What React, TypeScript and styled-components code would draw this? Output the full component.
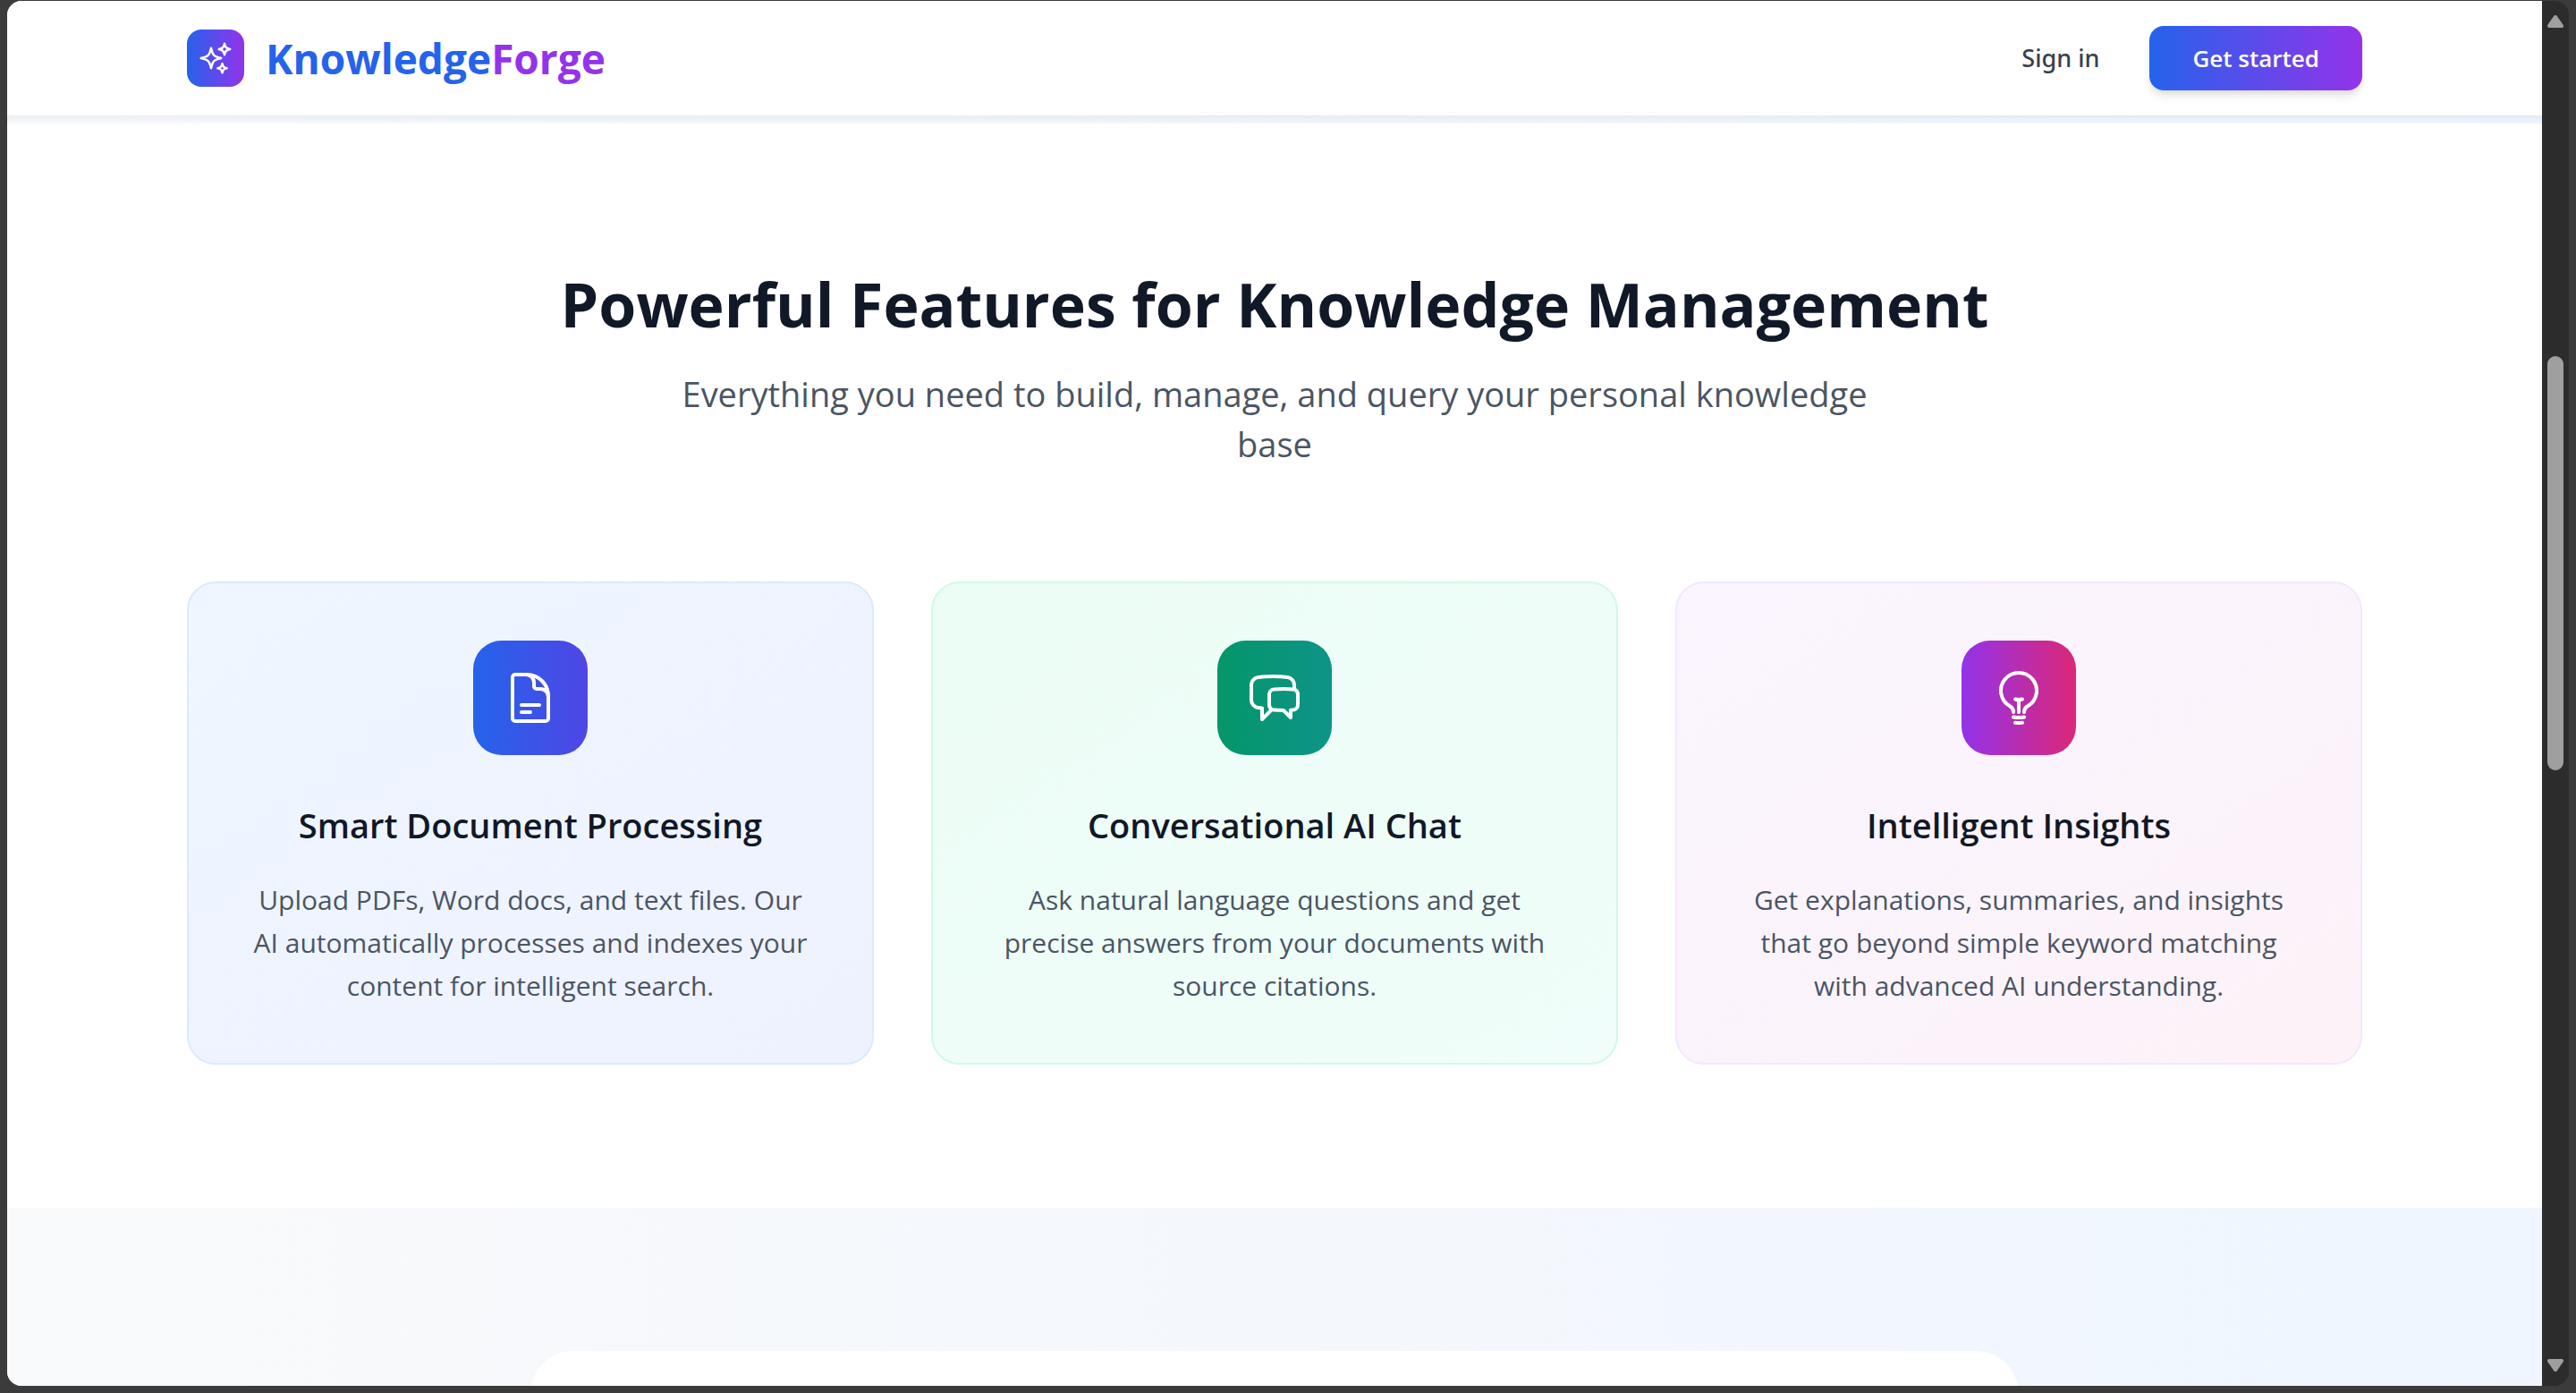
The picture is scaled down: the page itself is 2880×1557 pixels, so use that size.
import React from "react";
import styled, { createGlobalStyle } from "styled-components";
import {
  HiOutlineChatBubbleLeftRight,
  HiOutlineDocumentText,
  HiOutlineLightBulb,
  HiOutlineSparkles,
} from "react-icons/hi2";

const GlobalStyle = createGlobalStyle`
  *, *::before, *::after { box-sizing: border-box; }
  body {
    margin: 0;
    background: #3b3b3b;
    color: #111827;
    font-family: "Segoe UI", "Open Sans", "Noto Sans", sans-serif;
  }
  h2, h3, p { margin: 0; }
`;

const Frame = styled.div`
  height: 100vh;
  padding: 1px 8px 8px;
  background: #3b3b3b;
`;

const Window = styled.div`
  display: flex;
  height: 100%;
  border-radius: 16px;
  overflow: hidden;
  background: #2c2c2c;
`;

const Viewport = styled.div`
  flex: 1;
  min-width: 0;
  overflow: hidden;
  background: #ffffff;
`;

const Header = styled.header`
  background: #ffffff;
`;

const Container = styled.div`
  max-width: 2560px;
  margin: 0 auto;
  padding: 0 64px;
`;

const Bar = styled(Container)`
  display: flex;
  align-items: center;
  justify-content: space-between;
  height: 128px;
`;

const Brand = styled.a`
  display: flex;
  align-items: center;
  gap: 24px;
  color: #2563eb;
  font-size: 46px;
  line-height: 64px;
  font-weight: 700;
  text-decoration: none;
`;

const BrandAccent = styled.span`
  color: #9333ea;
`;

const BrandMark = styled.span`
  display: grid;
  place-items: center;
  width: 64px;
  height: 64px;
  border-radius: 16px;
  background: linear-gradient(to right, #2563eb, #9333ea);
  color: #ffffff;
`;

const Nav = styled.nav`
  display: flex;
  align-items: center;
  gap: 32px;
`;

const SignIn = styled.a`
  padding: 16px 24px;
  color: #374151;
  font-family: "Segoe UI", "Noto Sans", sans-serif;
  font-size: 27px;
  line-height: 40px;
  font-weight: 500;
  text-decoration: none;
`;

const GetStarted = styled.button`
  padding: 16px 48px;
  border: 0;
  border-radius: 16px;
  background: linear-gradient(to right, #2563eb, #9333ea);
  box-shadow: 0 8px 12px -2px rgba(0, 0, 0, 0.1), 0 4px 8px -4px rgba(0, 0, 0, 0.1);
  color: #ffffff;
  font-family: inherit;
  font-size: 26px;
  line-height: 40px;
  font-weight: 600;
  cursor: pointer;
`;

const HeroEdge = styled.div`
  height: 9px;
  background:
    linear-gradient(to bottom, rgba(0, 0, 0, 0.05), rgba(0, 0, 0, 0)),
    linear-gradient(to right, #f8fafc, #eff6ff);
`;

const Section = styled.section`
  padding: 160px 0;
`;

const Intro = styled.div`
  margin-bottom: 126px;
  text-align: center;
`;

const Heading = styled.h2`
  margin-bottom: 30px;
  font-size: 68px;
  line-height: 84px;
  font-weight: 700;
`;

const Lead = styled.p`
  max-width: 1344px;
  margin: 0 auto;
  color: #4b5563;
  font-size: 38px;
  line-height: 56px;
`;

const Cards = styled.div`
  display: grid;
  grid-template-columns: repeat(3, 1fr);
  gap: 64px;
`;

const Card = styled.article<{ $from: string; $to: string; $edge: string }>`
  display: flex;
  flex-direction: column;
  align-items: center;
  padding: 64px 64px 62px;
  border: 2px solid ${(p) => p.$edge};
  border-radius: 32px;
  background: linear-gradient(to bottom right, ${(p) => p.$from}, ${(p) => p.$to});
  text-align: center;
`;

const Tile = styled.div<{ $from: string; $to: string }>`
  display: grid;
  place-items: center;
  width: 128px;
  height: 128px;
  margin-bottom: 50px;
  border-radius: 32px;
  background: linear-gradient(to right, ${(p) => p.$from}, ${(p) => p.$to});
  color: #ffffff;
`;

const CardTitle = styled.h3`
  margin-bottom: 32px;
  font-size: 38px;
  line-height: 56px;
  font-weight: 600;
`;

const CardText = styled.p`
  color: #4b5563;
  font-size: 30px;
  line-height: 48px;
`;

const Showcase = styled(Section)`
  background: linear-gradient(to right, #f9fafb, #eff6ff);
`;

const Narrow = styled.div`
  max-width: 1792px;
  margin: 0 auto;
  padding: 0 64px;
`;

const Panel = styled.div`
  min-height: 640px;
  border-radius: 48px;
  background: #ffffff;
  box-shadow: 0 40px 50px -10px rgba(0, 0, 0, 0.1);
`;

const Scrollbar = styled.div`
  display: flex;
  flex-direction: column;
  align-items: center;
  width: 30px;
  padding: 16px 0;
  background: #2c2c2c;
`;

const Track = styled.div`
  flex: 1;
  width: 18px;
  padding-top: 367px;
`;

const Thumb = styled.div`
  height: 463px;
  border-radius: 9px;
  background: #9f9f9f;
`;

const Arrow = styled.svg`
  display: block;
  width: 18px;
  height: 14px;
  fill: #9f9f9f;
  stroke: #9f9f9f;
  stroke-width: 4;
  stroke-linejoin: round;
`;

const features = [
  {
    title: "Smart Document Processing",
    text: "Upload PDFs, Word docs, and text files. Our AI automatically processes and indexes your content for intelligent search.",
    Icon: HiOutlineDocumentText,
    card: { $from: "#eff6ff", $to: "#eef2ff", $edge: "#dbeafe" },
    tile: { $from: "#2563eb", $to: "#4f46e5" },
  },
  {
    title: "Conversational AI Chat",
    text: "Ask natural language questions and get precise answers from your documents with source citations.",
    Icon: HiOutlineChatBubbleLeftRight,
    card: { $from: "#ecfdf5", $to: "#f0fdfa", $edge: "#d1fae5" },
    tile: { $from: "#059669", $to: "#0d9488" },
  },
  {
    title: "Intelligent Insights",
    text: "Get explanations, summaries, and insights that go beyond simple keyword matching with advanced AI understanding.",
    Icon: HiOutlineLightBulb,
    card: { $from: "#faf5ff", $to: "#fdf2f8", $edge: "#f3e8ff" },
    tile: { $from: "#9333ea", $to: "#db2777" },
  },
];

export default function App() {
  return (
    <Frame>
      <GlobalStyle />
      <Window>
        <Viewport>
          <Header>
            <Bar>
              <Brand href="#">
                <BrandMark>
                  <HiOutlineSparkles size={40} />
                </BrandMark>
                <span>
                  Knowledge<BrandAccent>Forge</BrandAccent>
                </span>
              </Brand>
              <Nav>
                <SignIn href="#signin">Sign in</SignIn>
                <GetStarted type="button">Get started</GetStarted>
              </Nav>
            </Bar>
          </Header>
          <main>
            <HeroEdge />
            <Section>
              <Container>
                <Intro>
                  <Heading>Powerful Features for Knowledge Management</Heading>
                  <Lead>
                    Everything you need to build, manage, and query your personal knowledge base
                  </Lead>
                </Intro>
                <Cards>
                  {features.map(({ title, text, Icon, card, tile }) => (
                    <Card key={title} {...card}>
                      <Tile {...tile}>
                        <Icon size={64} />
                      </Tile>
                      <CardTitle>{title}</CardTitle>
                      <CardText>{text}</CardText>
                    </Card>
                  ))}
                </Cards>
              </Container>
            </Section>
            <Showcase>
              <Narrow>
                <Panel />
              </Narrow>
            </Showcase>
          </main>
        </Viewport>
        <Scrollbar aria-hidden="true">
          <Arrow viewBox="0 0 18 14">
            <path d="M9 2 L16 12 H2 Z" />
          </Arrow>
          <Track>
            <Thumb />
          </Track>
          <Arrow viewBox="0 0 18 14">
            <path d="M9 12 L16 2 H2 Z" />
          </Arrow>
        </Scrollbar>
      </Window>
    </Frame>
  );
}
